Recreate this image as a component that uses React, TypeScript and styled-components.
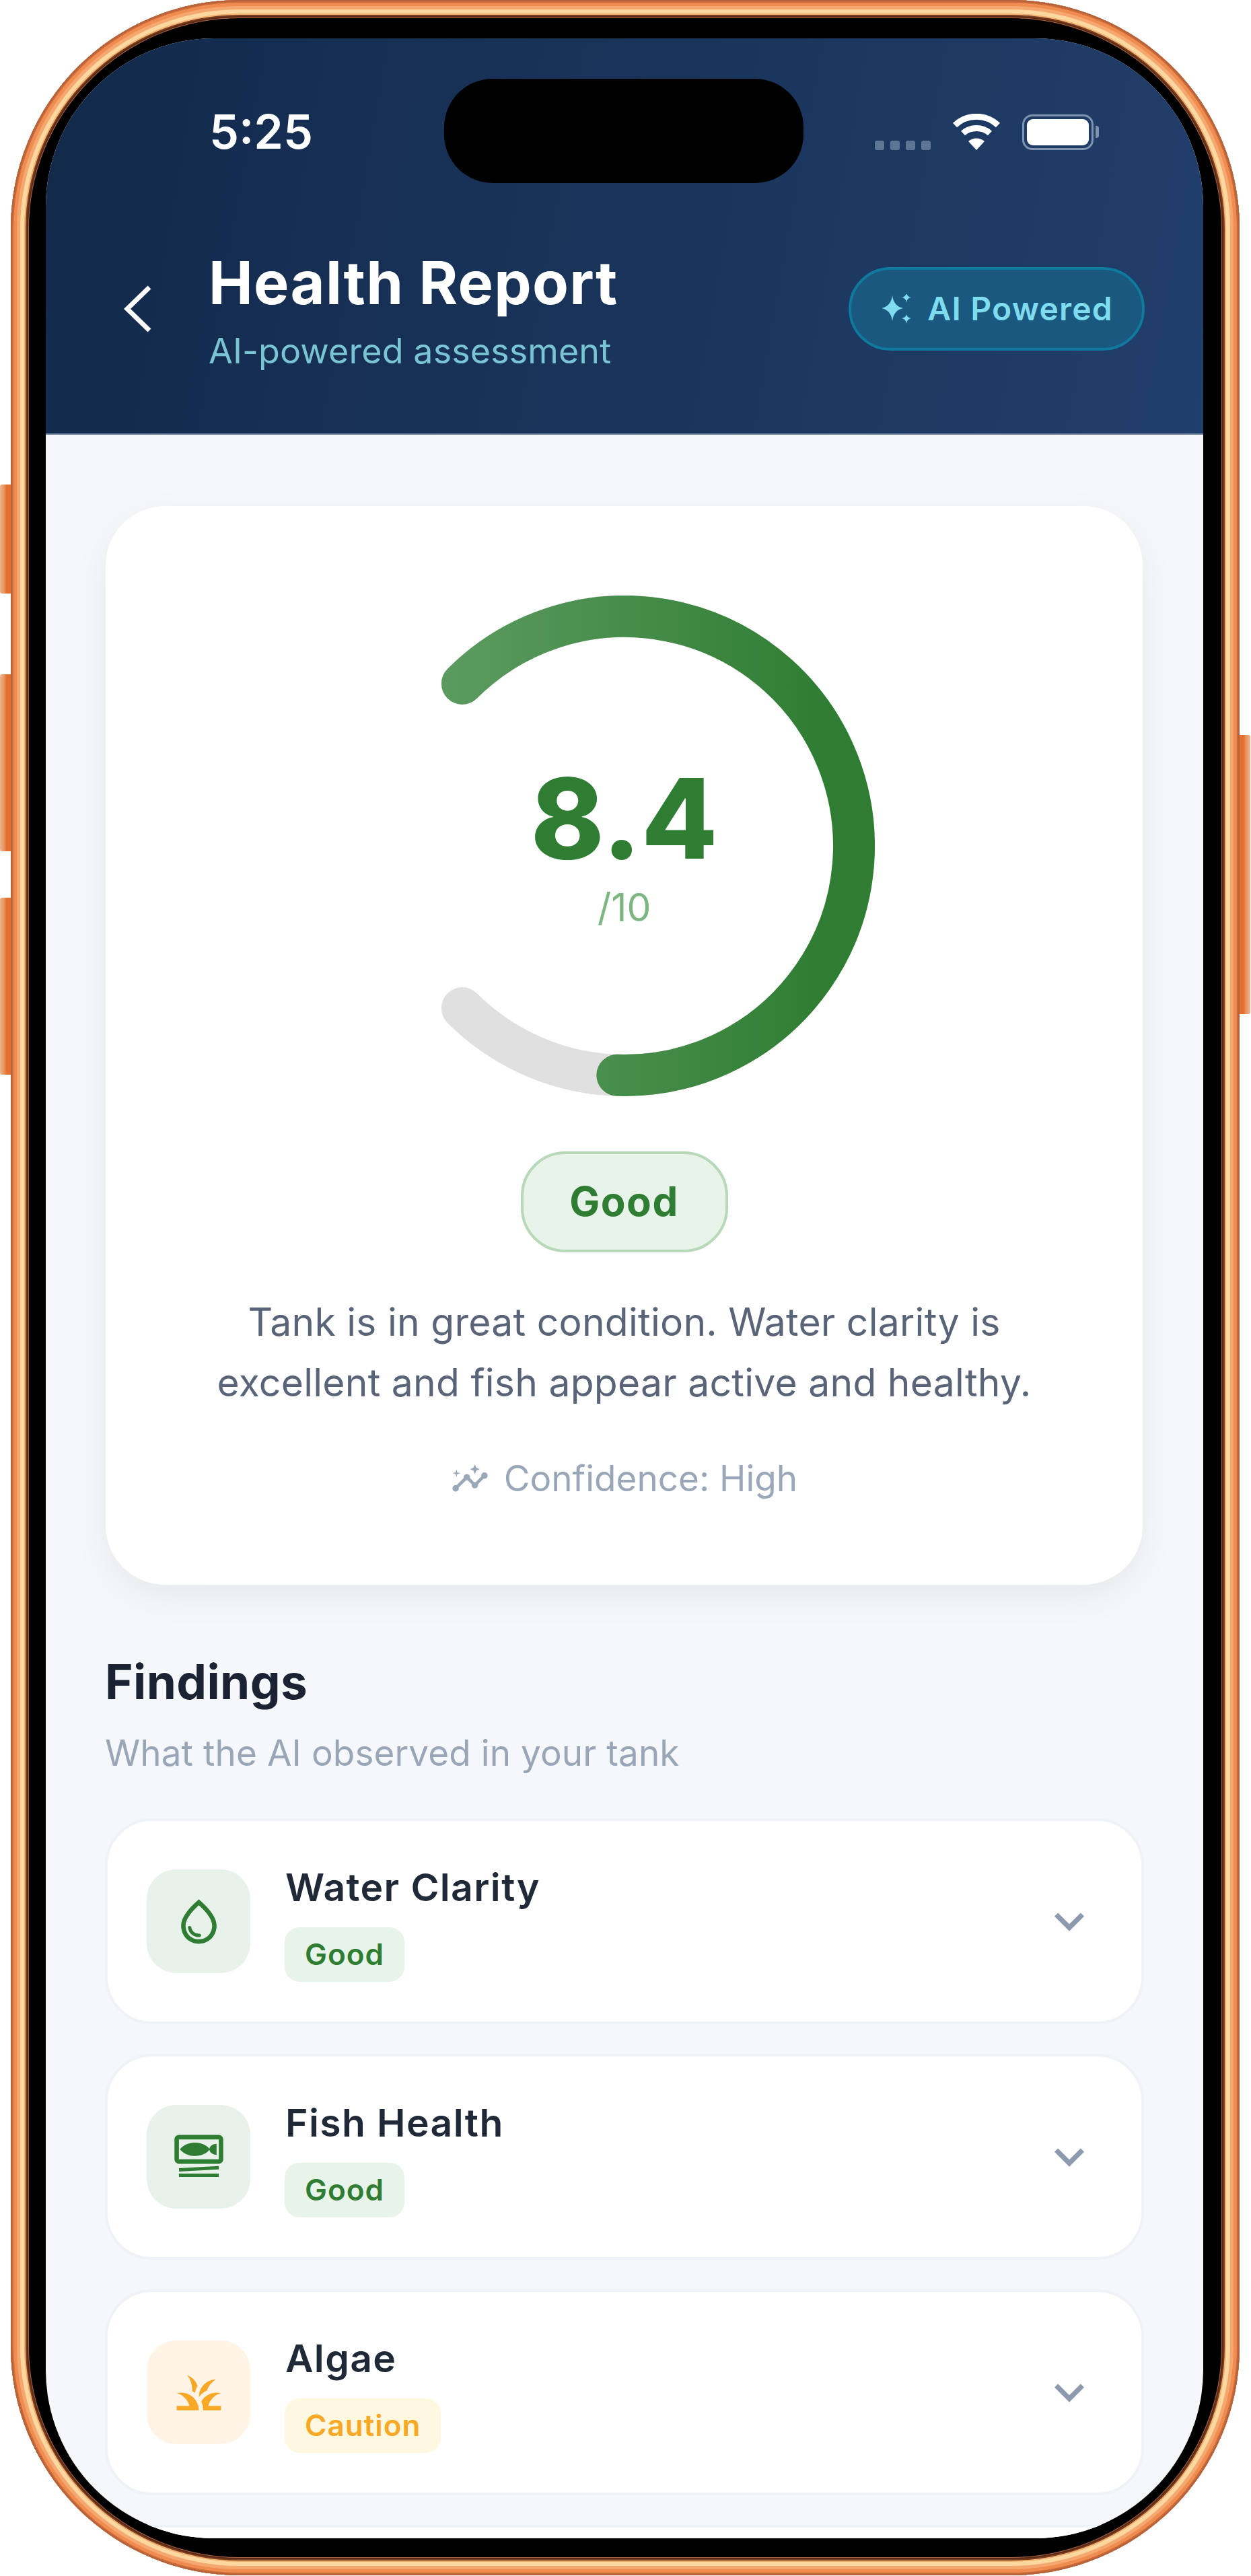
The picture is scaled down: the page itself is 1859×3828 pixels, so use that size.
import styled, { createGlobalStyle } from 'styled-components';
import {
  MdGrass,
  MdInsights,
  MdKeyboardArrowDown,
  MdOutlineSetMeal,
  MdOutlineWaterDrop,
} from 'react-icons/md';
import type { ReactNode } from 'react';

type TTone = 'good' | 'caution';

type TFinding = {
  name: string;
  status: string;
  tone: TTone;
  icon: ReactNode;
};

const GREEN = '#2e7d32';
const AMBER = '#f9a825';

const findings: TFinding[] = [
  { name: 'Water Clarity', status: 'Good', tone: 'good', icon: <MdOutlineWaterDrop /> },
  { name: 'Fish Health', status: 'Good', tone: 'good', icon: <MdOutlineSetMeal /> },
  { name: 'Algae', status: 'Caution', tone: 'caution', icon: <MdGrass /> },
];

const GAUGE_CENTER = 372;
const GAUGE_RADIUS = 341;

const arcPath = (from: number, sweep: number) => {
  const point = (deg: number) => {
    const rad = (deg * Math.PI) / 180;
    return `${GAUGE_CENTER + GAUGE_RADIUS * Math.sin(rad)} ${GAUGE_CENTER - GAUGE_RADIUS * Math.cos(rad)}`;
  };
  const large = sweep > 180 ? 1 : 0;
  return `M ${point(from)} A ${GAUGE_RADIUS} ${GAUGE_RADIUS} 0 ${large} 1 ${point(from + sweep)}`;
};

const App = () => (
  <>
    <GlobalStyle />
    <Phone>
      <SideButton $top={720} $height={162} />
      <SideButton $top={1002} $height={263} />
      <SideButton $top={1334} $height={263} />
      <PowerButton />
      <Screen>
        <Island />
        <Header>
          <StatusBar>
            <Time>5:25</Time>
            <StatusIcons>
              <SignalDots>
                <i /><i /><i /><i />
              </SignalDots>
              <svg width="72" height="54" viewBox="0 0 72 54" fill="none" stroke="#fff" strokeWidth="9">
                <path d="M4 17 C22 0 50 0 68 17" />
                <path d="M16 29 C27 19 45 19 56 29" />
                <path d="M36 54 L24 41 C31 35 41 35 48 41 Z" fill="#fff" stroke="none" />
              </svg>
              <Battery>
                <BatteryFill />
              </Battery>
            </StatusIcons>
          </StatusBar>

          <TitleRow>
            <svg width="48" height="76" viewBox="0 0 48 76" fill="none" stroke="#fff" strokeWidth="7">
              <path d="M41 6 L8 38 L41 70" />
            </svg>
            <Titles>
              <Title>Health Report</Title>
              <Subtitle>AI-powered assessment</Subtitle>
            </Titles>
            <AiPill>
              <svg width="44" height="44" viewBox="0 0 44 44" fill="currentColor">
                <path d="M15 2 Q17 18 31 21 Q17 24 15 40 Q13 24 -1 21 Q13 18 15 2 Z" />
                <path d="M36 -2 Q37 4 43 5 Q37 6 36 12 Q35 6 29 5 Q35 4 36 -2 Z" />
                <path d="M36 30 Q37 35 43 36 Q37 37 36 44 Q35 37 29 36 Q35 35 36 30 Z" />
              </svg>
              AI Powered
            </AiPill>
          </TitleRow>
        </Header>

        <Content>
          <ScoreCard>
            <Gauge>
              <svg width="744" height="744" viewBox="0 0 744 744" fill="none" strokeWidth="62" strokeLinecap="round">
                <defs>
                  <linearGradient id="gaugeFill" gradientUnits="userSpaceOnUse" x1="0" y1="0" x2="680" y2="0">
                    <stop offset="0" stopColor="#64a068" />
                    <stop offset="1" stopColor={GREEN} />
                  </linearGradient>
                </defs>
                <path d={arcPath(315, 270)} stroke="#e0e0e0" />
                <path d={arcPath(315, 226.8)} stroke="url(#gaugeFill)" />
              </svg>
              <GaugeLabel>
                <Score>8.4</Score>
                <ScoreMax>/10</ScoreMax>
              </GaugeLabel>
            </Gauge>
            <Verdict>Good</Verdict>
            <Summary>
              Tank is in great condition. Water clarity is
              <br />
              excellent and fish appear active and healthy.
            </Summary>
            <Confidence>
              <MdInsights />
              Confidence: High
            </Confidence>
          </ScoreCard>

          <SectionTitle>Findings</SectionTitle>
          <SectionHint>What the AI observed in your tank</SectionHint>

          <FindingList>
            {findings.map(finding => (
              <FindingRow key={finding.name}>
                <FindingIcon $tone={finding.tone}>{finding.icon}</FindingIcon>
                <FindingText>
                  <FindingName>{finding.name}</FindingName>
                  <StatusTag $tone={finding.tone}>{finding.status}</StatusTag>
                </FindingText>
                <Chevron>
                  <MdKeyboardArrowDown />
                </Chevron>
              </FindingRow>
            ))}
            <FindingRow />
          </FindingList>
        </Content>
      </Screen>
    </Phone>
  </>
);

const GlobalStyle = createGlobalStyle`
  html, body {
    margin: 0;
    padding: 0;
    background: #fff;
    font-family: 'Inter', 'Liberation Sans', sans-serif;
  }
`;

const Phone = styled.div`
  position: relative;
  box-sizing: border-box;
  width: 1826px;
  height: 3827px;
  margin-left: 16px;
  padding: 57px 54px 55px 52px;
  border-radius: 340px;
  background: #000;
  box-shadow:
    inset 0 0 0 2px #b5613c,
    inset 0 0 0 4px #c96b3a,
    inset 0 0 0 9px #f08c50,
    inset 0 0 0 14px #f4a870,
    inset 0 0 0 20px #fdd7a0,
    inset 0 0 0 22px #f0b070,
    inset 0 0 0 24px #7a3d20,
    inset 0 0 0 26px #5a2a15,
    inset 0 0 0 27px #a86040;
`;

const SideButton = styled.div<{ $top: number; $height: number }>`
  position: absolute;
  left: -16px;
  top: ${({ $top }) => $top}px;
  width: 16px;
  height: ${({ $height }) => $height}px;
  border-radius: 3px 0 0 3px;
  background: linear-gradient(90deg, #eeb48c 0%, #e8935f 40%, #e4702f 60%);
`;

const PowerButton = styled.div`
  position: absolute;
  right: -16px;
  top: 1092px;
  width: 16px;
  height: 415px;
  border-radius: 0 3px 3px 0;
  background: linear-gradient(270deg, #eeb48c 0%, #e8935f 40%, #e4702f 60%);
`;

const Screen = styled.div`
  position: relative;
  width: 1720px;
  height: 3715px;
  overflow: hidden;
  border-radius: 250px;
  background: #f5f7fa;
`;

const Island = styled.div`
  position: absolute;
  left: 592px;
  top: 60px;
  width: 534px;
  height: 155px;
  border-radius: 72px;
  background: #000;
`;

const Header = styled.header`
  box-sizing: border-box;
  height: 589px;
  padding-top: 112px;
  background: linear-gradient(100deg, #12294a 0%, #213f6b 100%);
  border-bottom: 2px solid #667e9c;
`;

const StatusBar = styled.div`
  display: flex;
  align-items: center;
  justify-content: space-between;
  height: 53px;
  padding: 0 152px 0 243px;
`;

const Time = styled.span`
  font-size: 70px;
  font-weight: 600;
  line-height: 56px;
  color: #fff;
`;

const StatusIcons = styled.div`
  display: flex;
  align-items: flex-end;
  gap: 32px;
`;

const SignalDots = styled.div`
  display: flex;
  gap: 9px;

  i {
    width: 14px;
    height: 14px;
    border-radius: 3px;
    background: #5f7594;
  }
`;

const Battery = styled.div`
  position: relative;
  box-sizing: border-box;
  width: 106px;
  height: 53px;
  margin-right: 11px;
  padding: 4px;
  border: 3px solid #7f93ae;
  border-radius: 15px;

  &::after {
    content: '';
    position: absolute;
    right: -11px;
    top: 14px;
    width: 5px;
    height: 18px;
    border-radius: 0 4px 4px 0;
    background: #7f93ae;
  }
`;

const BatteryFill = styled.div`
  height: 100%;
  border-radius: 9px;
  background: #fff;
`;

const TitleRow = styled.div`
  display: flex;
  align-items: center;
  margin-top: 138px;
  padding: 0 87px 0 113px;
`;

const Titles = styled.div`
  display: flex;
  flex-direction: column;
  gap: 7px;
  margin-left: 81px;
`;

const Title = styled.h1`
  margin: 0;
  font-size: 88px;
  font-weight: 700;
  line-height: 120px;
  letter-spacing: 1.3px;
  color: #fff;
`;

const Subtitle = styled.span`
  font-size: 52px;
  line-height: 70px;
  letter-spacing: 0.1px;
  color: #7ac5d4;
`;

const AiPill = styled.div`
  box-sizing: border-box;
  display: flex;
  align-items: center;
  gap: 23px;
  height: 124px;
  margin-left: auto;
  padding: 0 43px 0 46px;
  border: 4px solid #0f7a9e;
  border-radius: 62px;
  background: #1a5880;
  font-size: 48px;
  font-weight: 600;
  letter-spacing: 1.2px;
  color: #7fdcee;
`;

const Content = styled.main`
  padding: 106px 90px 0 89px;
`;

const ScoreCard = styled.section`
  box-sizing: border-box;
  display: flex;
  flex-direction: column;
  align-items: center;
  height: 1603px;
  padding-top: 133px;
  border-radius: 88px;
  background: #fff;
  box-shadow: 0 18px 54px rgba(0, 0, 0, 0.06);
`;

const Gauge = styled.div`
  position: relative;
  width: 744px;
  height: 744px;
`;

const GaugeLabel = styled.div`
  position: absolute;
  inset: 0;
  display: flex;
  flex-direction: column;
  align-items: center;
  justify-content: center;
  gap: 13px;
`;

const Score = styled.span`
  font-size: 165px;
  font-weight: 800;
  line-height: 170px;
  color: ${GREEN};
`;

const ScoreMax = styled.span`
  font-size: 57px;
  line-height: 70px;
  color: #7db681;
`;

const Verdict = styled.div`
  box-sizing: border-box;
  display: flex;
  align-items: center;
  justify-content: center;
  width: 308px;
  height: 150px;
  margin-top: 82px;
  padding-bottom: 3px;
  border: 4px solid #b7d8b9;
  border-radius: 66px;
  background: #e8f3e9;
  font-size: 60px;
  font-weight: 700;
  letter-spacing: 1.5px;
  color: ${GREEN};
`;

const Summary = styled.p`
  margin: 59px 0 0;
  font-size: 57px;
  line-height: 90px;
  letter-spacing: 0.25px;
  text-align: center;
  color: #5a6478;
`;

const Confidence = styled.div`
  display: flex;
  align-items: center;
  gap: 22px;
  height: 70px;
  margin-top: 62px;
  font-size: 53px;
  color: #9aa7b8;

  svg {
    width: 57px;
    height: 57px;
  }
`;

const SectionTitle = styled.h2`
  margin: 99px 0 0 -1px;
  font-size: 71px;
  font-weight: 700;
  line-height: 90px;
  letter-spacing: 0.4px;
  color: #1a2233;
`;

const SectionHint = styled.p`
  margin: 26px 0 0 -1px;
  font-size: 53px;
  line-height: 70px;
  letter-spacing: 0.1px;
  color: #98a6b8;
`;

const FindingList = styled.div`
  display: flex;
  flex-direction: column;
  gap: 44px;
  margin: 62px -2px 0 -1px;
`;

const FindingRow = styled.div`
  box-sizing: border-box;
  display: flex;
  align-items: center;
  flex-shrink: 0;
  height: 306px;
  padding: 0 63px 0 58px;
  border: 4px solid #eff2f6;
  border-radius: 70px;
  background: #fff;
`;

const FindingIcon = styled.div<{ $tone: TTone }>`
  display: flex;
  align-items: center;
  justify-content: center;
  width: 154px;
  height: 154px;
  border-radius: 44px;
  background: ${({ $tone }) => ($tone === 'good' ? '#e8f2ea' : '#fff4e6')};
  color: ${({ $tone }) => ($tone === 'good' ? GREEN : AMBER)};
  font-size: 79px;
`;

const FindingText = styled.div`
  display: flex;
  flex-direction: column;
  align-items: flex-start;
  gap: 19px;
  margin-left: 52px;
`;

const FindingName = styled.span`
  font-size: 57px;
  font-weight: 600;
  line-height: 80px;
  letter-spacing: 1.4px;
  color: #1f2937;
`;

const StatusTag = styled.span<{ $tone: TTone }>`
  box-sizing: border-box;
  height: 81px;
  margin-left: -1px;
  padding: 0 30px;
  border-radius: 22px;
  background: ${({ $tone }) => ($tone === 'good' ? '#e8f3e9' : '#fff8e1')};
  font-size: 44px;
  font-weight: 600;
  line-height: 81px;
  letter-spacing: 1px;
  color: ${({ $tone }) => ($tone === 'good' ? GREEN : AMBER)};
`;

const Chevron = styled.div`
  display: flex;
  margin-left: auto;
  color: #8d9aae;
  font-size: 88px;
`;

export default App;
